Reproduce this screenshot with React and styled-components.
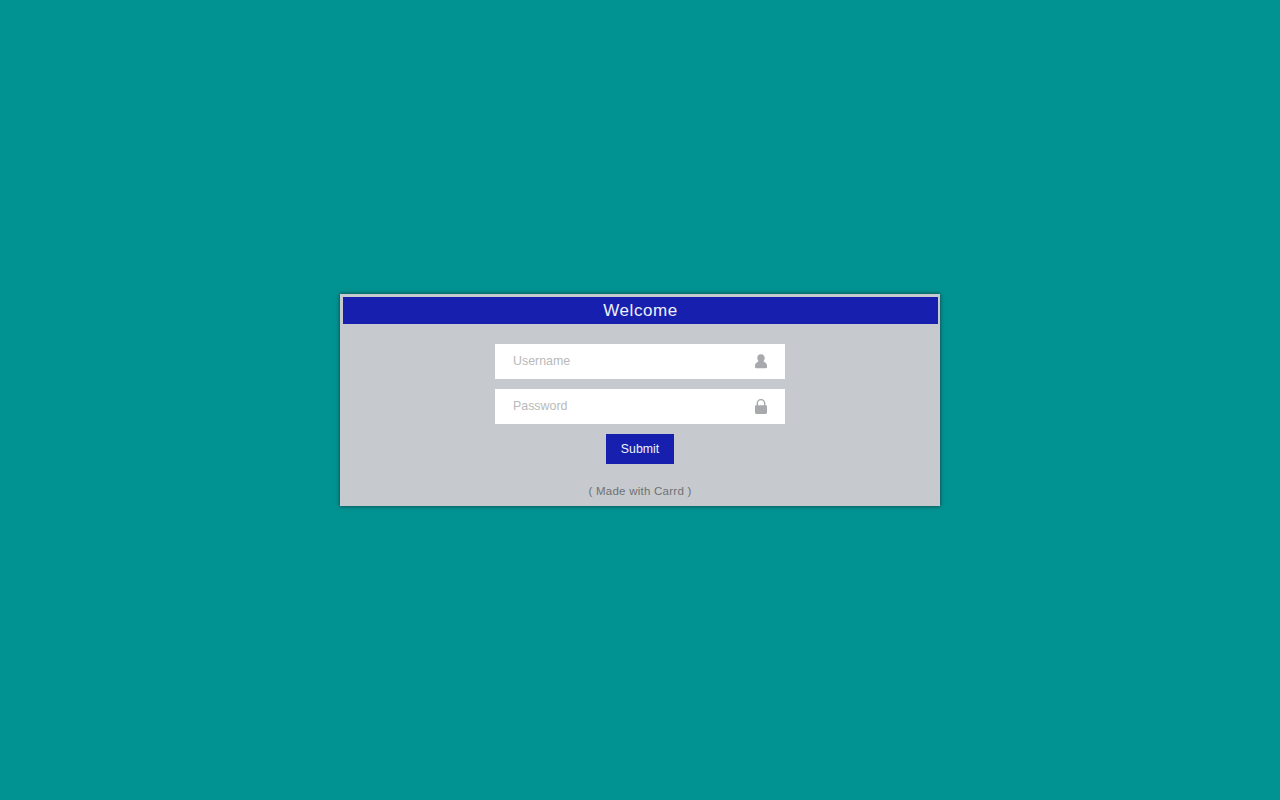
import styled, { createGlobalStyle } from "styled-components";

const GlobalStyle = createGlobalStyle`
  html, body {
    margin: 0;
    height: 100%;
  }
  body {
    background-color: #009392;
    font-family: "Liberation Sans", Arial, sans-serif;
  }
  #root {
    height: 100%;
  }
`;

const Page = styled.div`
  height: 800px;
  display: flex;
  justify-content: center;
  padding-top: 294px;
  box-sizing: border-box;
`;

const Card = styled.div`
  width: 600px;
  height: 212px;
  box-sizing: border-box;
  padding: 3px 2px 0;
  background-color: #c6c9cd;
  box-shadow: 0 0 4px rgba(30, 50, 60, 0.95);
  display: flex;
  flex-direction: column;
  align-items: center;
`;

const Header = styled.h1`
  align-self: stretch;
  height: 27px;
  margin: 0 0 0 1px;
  background-color: #1720ae;
  color: #eef0fa;
  font-family: "Liberation Sans", Arial, sans-serif;
  font-size: 17px;
  font-weight: 400;
  letter-spacing: 0.6px;
  line-height: 27px;
  text-align: center;
`;

const Form = styled.form`
  margin-top: 20px;
  display: flex;
  flex-direction: column;
  align-items: center;
  gap: 10px;
`;

const Field = styled.label`
  width: 290px;
  height: 35px;
  box-sizing: border-box;
  padding: 0 18px;
  background-color: #fff;
  display: flex;
  align-items: center;
  justify-content: space-between;
`;

const Input = styled.input`
  flex: 1;
  min-width: 0;
  height: 100%;
  padding: 0 0 2px;
  box-sizing: border-box;
  border: none;
  outline: none;
  background: transparent;
  font-family: "Liberation Sans", Arial, sans-serif;
  font-size: 12.4px;
  color: #333;
  &::placeholder {
    color: #b8b9ba;
    opacity: 1;
  }
`;

const Icon = styled.svg`
  width: 12px;
  height: 15px;
  flex: none;
  fill: #a8a9ac;
`;

const SubmitButton = styled.button`
  width: 68px;
  height: 30px;
  padding: 0 0 1px;
  border: none;
  background-color: #1720ae;
  color: #f2f3fb;
  font-family: "Liberation Sans", Arial, sans-serif;
  font-size: 12.3px;
`;

const Credit = styled.a`
  margin-top: 19px;
  color: #6f7174;
  font-size: 11.5px;
  letter-spacing: 0.25px;
  line-height: 16px;
  text-decoration: none;
`;

function UserIcon() {
  return (
    <Icon viewBox="0 0 12 15">
      <circle cx="6" cy="4" r="3.7" />
      <path d="M0 13v-1.400C0 9.400 2 8.200 3.800 7h4.400C10 8.200 12 9.400 12 11.600V13c0 .8-.4 1.200-1.200 1.200H1.200C.4 14.200 0 13.800 0 13z" />
    </Icon>
  );
}

function LockIcon() {
  return (
    <Icon viewBox="0 0 12 15">
      <path d="M0 7.500C0 6.700.5 6.200 1.300 6.200h9.400c.8 0 1.300.5 1.300 1.300V13.500c0 .9-.6 1.500-1.500 1.500h-9C.6 15 0 14.400 0 13.500z" />
      <path
        d="M2.300 7V4.300a3.700 3.700 0 0 1 7.400 0V7"
        fill="none"
        stroke="#a8a9ac"
        strokeWidth="1.400"
      />
    </Icon>
  );
}

export default function App() {
  return (
    <>
      <GlobalStyle />
      <Page>
        <Card>
          <Header>Welcome</Header>
          <Form onSubmit={(e) => e.preventDefault()}>
            <Field>
              <Input type="text" placeholder="Username" />
              <UserIcon />
            </Field>
            <Field>
              <Input type="password" placeholder="Password" />
              <LockIcon />
            </Field>
            <SubmitButton type="submit">Submit</SubmitButton>
          </Form>
          <Credit href="#">( Made with Carrd )</Credit>
        </Card>
      </Page>
    </>
  );
}
